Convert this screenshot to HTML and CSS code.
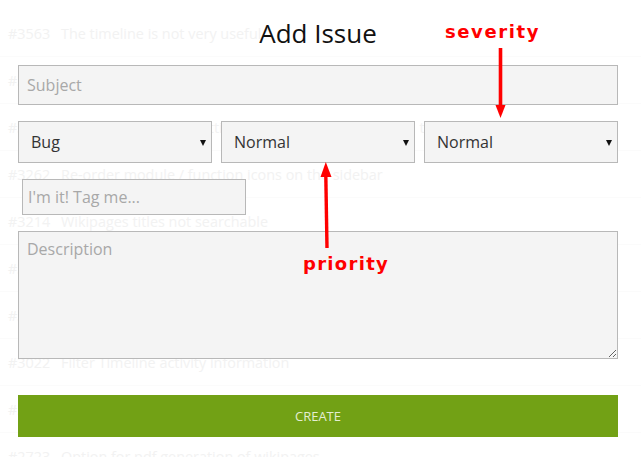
FILE: index.html
```html
<!DOCTYPE html>
<html>
<head>
<meta charset="utf-8">
<link rel="stylesheet" href="styles.css">
</head>
<body>
<ul class="issues">
  <li class="issue"><span class="num">#3563</span>The timeline is not very useful</li>
  <li class="issue"><span class="num">#3471</span>Search results are not ordered by relevance at all</li>
  <li class="issue"><span class="num">#3284</span>Wiki tables lose formatting after saving the page with the markdown syntax</li>
  <li class="issue"><span class="num">#3262</span>Re-order module / function icons on the sidebar</li>
  <li class="issue"><span class="num">#3214</span>Wikipages titles not searchable</li>
  <li class="issue"><span class="num">#3180</span>Attachments are not shown in the activity stream</li>
  <li class="issue"><span class="num">#3101</span>Allow custom fields on issues</li>
  <li class="issue"><span class="num">#3022</span>Filter Timeline activity information</li>
  <li class="issue"><span class="num">#2861</span>Email notifications for watched issues</li>
  <li class="issue"><span class="num">#2723</span>Option for pdf generation of wikipages</li>
</ul>

<div class="modal">
  <h1 class="title">Add Issue</h1>
  <form class="form">
    <input class="field subject" type="text" placeholder="Subject">
    <div class="selects">
      <div class="select-wrap"><select class="select"><option>Bug</option></select></div>
      <div class="select-wrap"><select class="select"><option>Normal</option></select></div>
      <div class="select-wrap"><select class="select"><option>Normal</option></select></div>
    </div>
    <input class="field tags" type="text" placeholder="I'm it! Tag me...">
    <textarea class="field description" placeholder="Description"></textarea>
    <button class="create" type="button">Create</button>
  </form>
</div>

<div class="note note-severity">severity</div>
<div class="note note-priority">priority</div>
<svg class="arrows" width="641" height="457" viewBox="0 0 641 457">
  <line x1="500.5" y1="48" x2="500.5" y2="106" stroke="#ff0000" stroke-width="3.6"/>
  <polygon points="495.5,105 505.5,105 500.5,118" fill="#ff0000"/>
  <line x1="327" y1="248" x2="325.8" y2="175" stroke="#ff0000" stroke-width="3.4"/>
  <polygon points="320.5,177 331.5,177 325.8,162" fill="#ff0000"/>
</svg>
</body>
</html>
```
FILE: styles.css
```css
html, body {
  margin: 0;
  padding: 0;
  background: #ffffff;
  width: 641px;
  height: 457px;
  overflow: hidden;
  font-family: "Open Sans", "Liberation Sans", sans-serif;
}

.issues {
  list-style: none;
  margin: 0;
  padding: 10px 0 0 0;
}

.issue {
  height: 46px;
  border-bottom: 1px solid #fbfbfb;
  padding-left: 8px;
  display: flex;
  align-items: center;
  font-size: 14.4px;
  color: #f2f2f2;
  white-space: nowrap;
}

.num {
  display: inline-block;
  width: 53px;
}

.modal {
  position: absolute;
  left: 18px;
  top: 0;
  width: 600px;
}

.title {
  margin: 15px 0 0 0;
  height: 36px;
  line-height: 36px;
  font-size: 26px;
  font-weight: 400;
  color: #111111;
  text-align: center;
}

.form {
  margin-top: 14px;
  display: flex;
  flex-direction: column;
}

.field {
  box-sizing: border-box;
  border: 1px solid #b8b8b8;
  background: #f4f4f4;
  font-family: "Open Sans", "Liberation Sans", sans-serif;
  font-size: 16px;
  color: #333333;
  outline: none;
  border-radius: 0;
}

.field::placeholder {
  color: #a8a8a8;
  opacity: 1;
}

.subject {
  width: 600px;
  height: 40px;
  padding: 0 8px;
}

.selects {
  margin-top: 16px;
  display: flex;
  gap: 9px;
}

.select-wrap {
  position: relative;
  width: 194px;
  height: 42px;
}

.select-wrap::after {
  content: "";
  position: absolute;
  right: 6px;
  top: 19px;
  border-left: 3px solid transparent;
  border-right: 3px solid transparent;
  border-top: 6px solid #111111;
}

.select {
  -webkit-appearance: none;
  appearance: none;
  box-sizing: border-box;
  width: 100%;
  height: 100%;
  margin: 0;
  border: 1px solid #b8b8b8;
  border-radius: 0;
  background: #f4f4f4;
  padding: 0 0 0 12px;
  font-family: "Open Sans", "Liberation Sans", sans-serif;
  font-size: 16px;
  color: #333333;
  outline: none;
}

.tags {
  margin: 16px 0 0 4px;
  width: 224px;
  height: 36px;
  padding: 0 5px;
}

.description {
  margin-top: 16px;
  width: 600px;
  height: 128px;
  padding: 6px 8px;
  resize: vertical;
  display: block;
}

.create {
  margin-top: 36px;
  width: 600px;
  height: 42px;
  border: none;
  background: #72a115;
  color: #e4edd2;
  font-family: "Open Sans", "Liberation Sans", sans-serif;
  font-size: 13px;
  font-weight: 400;
  text-transform: uppercase;
  padding: 0;
}

.note {
  position: absolute;
  font-family: "DejaVu Sans", "Verdana", sans-serif;
  font-weight: 700;
  font-size: 18px;
  letter-spacing: 1.6px;
  color: #ff0000;
  line-height: 22px;
}

.note-severity {
  left: 445px;
  top: 21px;
}

.note-priority {
  left: 303px;
  top: 253px;
  letter-spacing: 1.3px;
}

.arrows {
  position: absolute;
  left: 0;
  top: 0;
  pointer-events: none;
}
```
